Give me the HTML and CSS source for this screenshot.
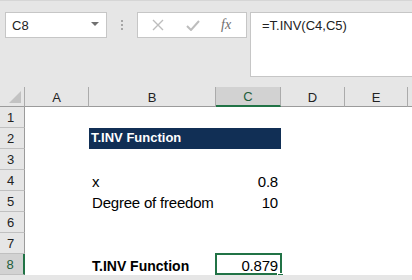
FILE: index.html
```html
<!DOCTYPE html>
<html lang="en">
<head>
    <meta charset="UTF-8">
    <meta name="viewport" content="width=device-width, initial-scale=1.0">
    <title>T.INV Function</title>
    <link rel="stylesheet" href="styles.css">
</head>
<body>

    <div class="toolbar">
        <div class="namebox">
            <span>C8</span>
            <span class="drop"></span>
        </div>
        <div class="grip"><i></i><i></i><i></i></div>
        <div class="buttons">
            <svg width="12" height="12" viewBox="0 0 12 12"><path d="M1 1L11 11M11 1L1 11" stroke="#bdbdbd" stroke-width="1.4" fill="none"/></svg>
            <svg width="14" height="11" viewBox="0 0 14 11"><path d="M1 6L5 10L13 1" stroke="#bdbdbd" stroke-width="2" fill="none"/></svg>
            <span class="fx">fx</span>
        </div>
        <div class="formula">=T.INV(C4,C5)</div>
    </div>

    <div class="sheet">
        <div class="corner"></div>
        <div class="colhead">A</div>
        <div class="colhead">B</div>
        <div class="colhead selected">C</div>
        <div class="colhead">D</div>
        <div class="colhead">E</div>
        <div class="colhead rest"></div>

        <div class="rowhead">1</div>
        <div class="cell"></div><div class="cell"></div><div class="cell"></div><div class="cell"></div><div class="cell"></div><div class="cell"></div>

        <div class="rowhead">2</div>
        <div class="cell"></div>
        <div class="cell title">T.INV Function</div>
        <div class="cell title"></div>
        <div class="cell"></div><div class="cell"></div><div class="cell"></div>

        <div class="rowhead">3</div>
        <div class="cell"></div><div class="cell"></div><div class="cell"></div><div class="cell"></div><div class="cell"></div><div class="cell"></div>

        <div class="rowhead">4</div>
        <div class="cell"></div>
        <div class="cell">x</div>
        <div class="cell num">0.8</div>
        <div class="cell"></div><div class="cell"></div><div class="cell"></div>

        <div class="rowhead">5</div>
        <div class="cell"></div>
        <div class="cell">Degree of freedom</div>
        <div class="cell num">10</div>
        <div class="cell"></div><div class="cell"></div><div class="cell"></div>

        <div class="rowhead">6</div>
        <div class="cell"></div><div class="cell"></div><div class="cell"></div><div class="cell"></div><div class="cell"></div><div class="cell"></div>

        <div class="rowhead">7</div>
        <div class="cell"></div><div class="cell"></div><div class="cell"></div><div class="cell"></div><div class="cell"></div><div class="cell"></div>

        <div class="rowhead selected">8</div>
        <div class="cell"></div>
        <div class="cell bold">T.INV Function</div>
        <div class="cell num active">0.879</div>
        <div class="cell"></div><div class="cell"></div><div class="cell"></div>
    </div>

</body>
</html>
```

FILE: styles.css
```css
body {
    margin: 0;
    background-color: #e6e6e6;
    font-family: "Liberation Sans", Arial, sans-serif;
    overflow: hidden;
}
.toolbar {
    display: flex;
    align-items: flex-start;
    height: 87px;
    padding: 11px 0 0 5px;
    border-top: 1px solid #d6d6d6;
    box-sizing: border-box;
}
.namebox {
    width: 102px;
    height: 26px;
    box-sizing: border-box;
    background-color: white;
    border: 1px solid #c6c6c6;
    display: flex;
    align-items: center;
    justify-content: space-between;
    padding: 0 7px 0 6px;
    font-size: 13px;
    color: #222;
}
.drop {
    width: 0;
    height: 0;
    border-left: 4px solid transparent;
    border-right: 4px solid transparent;
    border-top: 4px solid #707070;
    margin-top: -3px;
}
.grip {
    width: 30px;
    height: 26px;
    display: flex;
    flex-direction: column;
    align-items: center;
    justify-content: center;
    gap: 2px;
}
.grip i {
    width: 2px;
    height: 2px;
    background-color: #a6a6a6;
}
.buttons {
    width: 110px;
    height: 26px;
    box-sizing: border-box;
    background-color: white;
    border: 1px solid #c6c6c6;
    display: flex;
    align-items: center;
    padding: 0 0 0 14px;
    gap: 22px;
}
.fx {
    font-family: "Liberation Serif", "Times New Roman", serif;
    font-style: italic;
    font-size: 14px;
    color: #6e6e6e;
    margin-left: -1px;
}
.formula {
    margin-left: 3px;
    flex: 1;
    height: 65px;
    box-sizing: border-box;
    background-color: white;
    border: 1px solid #c6c6c6;
    border-right: none;
    padding: 5px 0 0 11px;
    font-size: 13px;
    color: #222;
}
.sheet {
    display: grid;
    grid-template-columns: 25px 64px 127px 65px 64px 63px 1fr;
    grid-template-rows: 20px repeat(8, 21px);
}
.corner {
    position: relative;
    border-right: 1px solid #ababab;
    border-bottom: 1px solid #9b9b9b;
}
.corner::after {
    content: "";
    position: absolute;
    right: 3px;
    bottom: 3px;
    width: 0;
    height: 0;
    border-left: 12px solid transparent;
    border-bottom: 12px solid #c2c2c2;
}
.colhead {
    border-right: 1px solid #ababab;
    border-bottom: 1px solid #9b9b9b;
    display: flex;
    align-items: center;
    justify-content: center;
    font-size: 13px;
    color: #222;
    padding-top: 1px;
}
.colhead.rest {
    border-right: none;
}
.colhead.selected {
    background-color: #d2d2d2;
    border-bottom: 2px solid #217346;
    color: #1e5e3a;
}
.rowhead {
    border-right: 1px solid #9b9b9b;
    border-bottom: 1px solid #c0c0c0;
    display: flex;
    align-items: center;
    justify-content: center;
    font-size: 13px;
    color: #222;
    padding-right: 3px;
}
.rowhead.selected {
    background-color: #d2d2d2;
    border-right: 2px solid #217346;
    color: #1e5e3a;
}
.cell {
    background-color: white;
    display: flex;
    align-items: flex-end;
    padding: 0 3px 1px 3px;
    font-size: 15px;
    letter-spacing: -0.2px;
    color: #000;
    white-space: nowrap;
}
.num {
    justify-content: flex-end;
}
.title {
    background-color: #112f55;
    color: white;
    font-weight: bold;
    font-size: 13px;
    letter-spacing: 0;
    padding-left: 2px;
    padding-bottom: 4px;
}
.bold {
    font-weight: bold;
    font-size: 14px;
    letter-spacing: 0;
}
.active {
    position: relative;
}
.active::after {
    content: "";
    position: absolute;
    left: -1px;
    top: -1px;
    right: -1px;
    bottom: 0;
    border: 2px solid #217346;
}
.active::before {
    content: "";
    position: absolute;
    right: -3px;
    bottom: -5px;
    width: 5px;
    height: 5px;
    background-color: #217346;
    border: 1px solid white;
    z-index: 1;
}
```
